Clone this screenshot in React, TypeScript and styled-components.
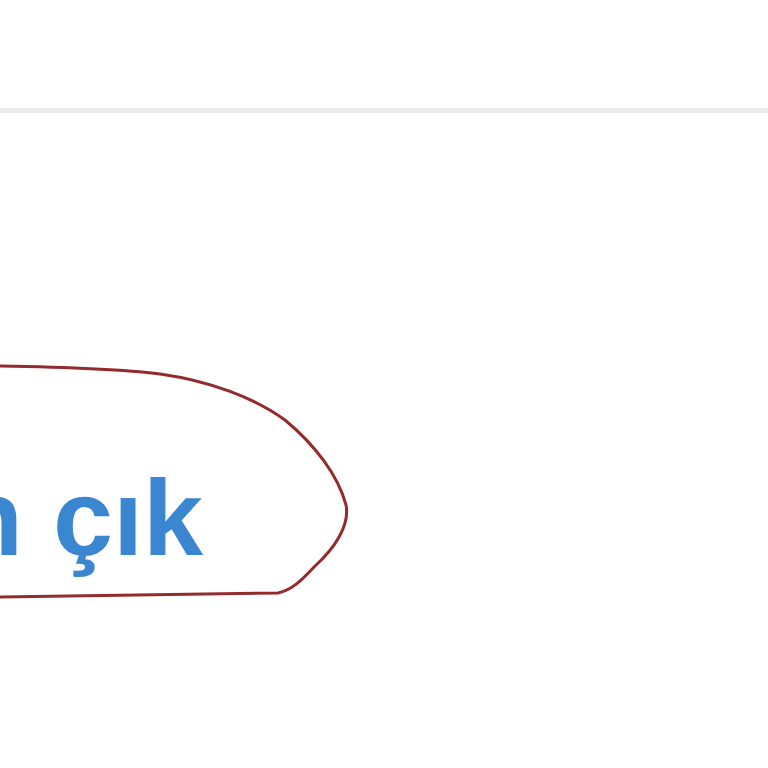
import styled, { createGlobalStyle } from "styled-components";

const GlobalStyle = createGlobalStyle`
  html, body {
    margin: 0;
    padding: 0;
    background: #fff;
    overflow: hidden;
  }
  body {
    font-family: "Liberation Sans", Arial, sans-serif;
  }
`

const Page = styled.div`
  position: relative;
  box-sizing: border-box;
  width: 768px;
  height: 768px;
  padding-top: 108px;
  overflow: hidden;
  background: #fff;
`

const Divider = styled.div`
  height: 5px;
  background: #ebebeb;
`

const Content = styled.div`
  padding-top: 351px;
  display: flex;
`

const SignOutLink = styled.a`
  display: block;
  margin-left: -559px;
  white-space: nowrap;
  font-family: "Liberation Sans", Arial, sans-serif;
  font-weight: 700;
  font-size: 108px;
  line-height: 1;
  color: #3a86d1;
  text-decoration: none;
  cursor: pointer;
`

const Annotation = styled.svg`
  position: absolute;
  left: 0;
  top: 0;
  pointer-events: none;
`

export default function App() {
  return (
    <>
      <GlobalStyle />
      <Page>
        <Divider />
        <Content>
          <SignOutLink>Oturumdan çık</SignOutLink>
        </Content>
        <Annotation width={768} height={768} viewBox="0 0 768 768">
          <path
            d="M -5 366 C 60 367, 120 369, 160 374 C 210 381, 255 398, 285 420 C 315 445, 338 475, 346 505 C 350 525, 335 548, 315 566 C 302 580, 292 590, 278 593 L -5 597"
            fill="none"
            stroke="#932a2b"
            strokeWidth={3}
            strokeLinecap="round"
            strokeLinejoin="round"
          />
        </Annotation>
      </Page>
    </>
  )
}
